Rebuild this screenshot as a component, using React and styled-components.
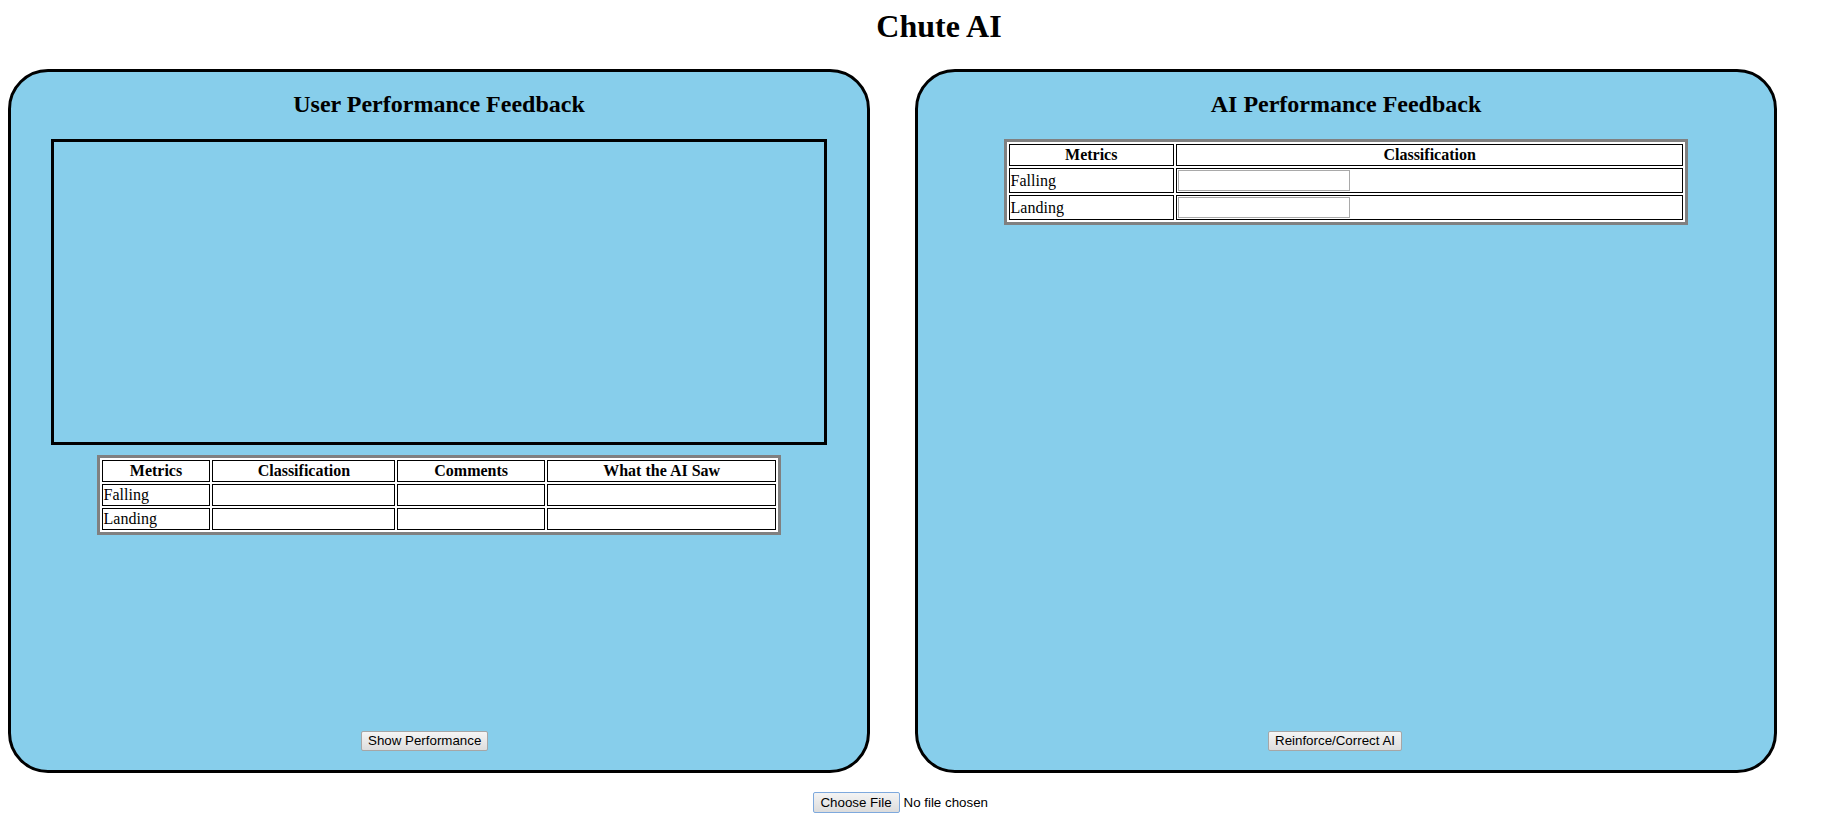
import React from "react";
import styled, { createGlobalStyle } from "styled-components";

const GlobalStyle = createGlobalStyle`
  html, body {
    overflow: hidden;
  }
  body {
    margin: 8px;
    background: #fff;
    color: #000;
    font-family: "Liberation Serif", "Times New Roman", serif;
    font-size: 16px;
  }
`;

const Page = styled.div`
  width: 1862px;
`;

const Title = styled.h1`
  margin: 0 0 24px;
  text-align: center;
  font-size: 32px;
  line-height: 37px;
  font-weight: bold;
`;

const PanelRow = styled.div`
  display: flex;
  gap: 45px;
`;

const Panel = styled.section`
  box-sizing: border-box;
  width: 862px;
  height: 704px;
  border: 3px solid #000;
  border-radius: 40px;
  background: #87ceeb;
  display: flex;
  flex-direction: column;
`;

const PanelTitle = styled.h2`
  margin: 18px 0 21px;
  text-align: center;
  font-size: 24px;
  line-height: 28px;
  font-weight: bold;
`;

const VideoFrame = styled.div`
  align-self: center;
  width: 90%;
  height: 300px;
  border: 3px solid #000;
  margin-bottom: 10px;
`;

const Table = styled.table`
  align-self: center;
  width: 80%;
  border: 3px solid #808080;
  border-spacing: 2px;
  background: #fff;
`;

const HeadCell = styled.th`
  border: 1px solid #000;
  padding: 1px;
  font-weight: bold;
  text-align: center;
  line-height: 18px;
`;

const Cell = styled.td`
  border: 1px solid #000;
  padding: 1px;
  line-height: 18px;
  text-align: left;
`;

const TextField = styled.input`
  box-sizing: border-box;
  display: block;
  width: 172px;
  height: 21px;
  margin: 0;
  padding: 1px 2px;
  border: 1px solid #a9a9a9;
  background: #fff;
  font: 13.333px "Liberation Sans", Arial, sans-serif;
`;

const Footer = styled.div`
  margin-top: auto;
  padding: 0 0 19px 350px;
`;

const Button = styled.button`
  box-sizing: border-box;
  height: 20px;
  padding: 0 6px;
  border: 1px solid #a6a6a6;
  border-radius: 2px;
  background: linear-gradient(#f5f5f5, #dddddd);
  color: #000;
  font: 13.333px "Liberation Sans", Arial, sans-serif;
  line-height: 18px;
`;

const FileRow = styled.div`
  margin-top: 19px;
  text-align: center;
`;

const FilePicker = styled.label`
  display: inline-flex;
  align-items: center;
  gap: 4px;
  width: 253px;
  font: 13.333px "Liberation Sans", Arial, sans-serif;
  text-align: left;
`;

const FileButton = styled.span`
  box-sizing: border-box;
  display: inline-flex;
  align-items: center;
  justify-content: center;
  width: 87px;
  height: 21px;
  border: 1px solid #7ea9dd;
  border-radius: 2px;
  background: linear-gradient(#f4f4f4, #dcdcdc);
`;

const HiddenInput = styled.input`
  display: none;
`;

const metrics = ["Falling", "Landing"];

function UserPanel() {
  return (
    <Panel>
      <PanelTitle>User Performance Feedback</PanelTitle>
      <VideoFrame />
      <Table>
        <thead>
          <tr>
            <HeadCell>Metrics</HeadCell>
            <HeadCell>Classification</HeadCell>
            <HeadCell>Comments</HeadCell>
            <HeadCell>What the AI Saw</HeadCell>
          </tr>
        </thead>
        <tbody>
          {metrics.map((m) => (
            <tr key={m}>
              <Cell>{m}</Cell>
              <Cell />
              <Cell />
              <Cell />
            </tr>
          ))}
        </tbody>
      </Table>
      <Footer>
        <Button type="button">Show Performance</Button>
      </Footer>
    </Panel>
  );
}

function AIPanel() {
  return (
    <Panel>
      <PanelTitle>AI Performance Feedback</PanelTitle>
      <Table>
        <thead>
          <tr>
            <HeadCell>Metrics</HeadCell>
            <HeadCell>Classification</HeadCell>
          </tr>
        </thead>
        <tbody>
          {metrics.map((m) => (
            <tr key={m}>
              <Cell>{m}</Cell>
              <Cell>
                <TextField type="text" />
              </Cell>
            </tr>
          ))}
        </tbody>
      </Table>
      <Footer>
        <Button type="button">Reinforce/Correct AI</Button>
      </Footer>
    </Panel>
  );
}

export default function App() {
  return (
    <Page>
      <GlobalStyle />
      <Title>Chute AI</Title>
      <PanelRow>
        <UserPanel />
        <AIPanel />
      </PanelRow>
      <FileRow>
        <FilePicker>
          <FileButton>Choose File</FileButton>
          <span>No file chosen</span>
          <HiddenInput type="file" />
        </FilePicker>
      </FileRow>
    </Page>
  );
}
